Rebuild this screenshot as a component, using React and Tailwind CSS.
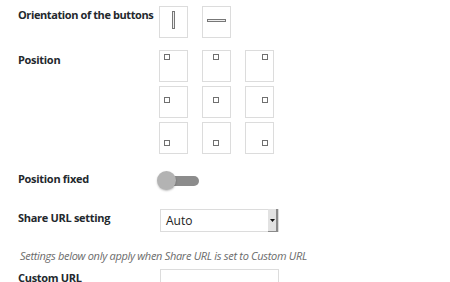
import React from "react";

const font = { fontFamily: '"Open Sans", "DejaVu Sans", sans-serif' };

function Box({ children, cls = "" }) {
  return (
    <div className={"w-[29px] h-[32px] border border-[#dcdcdc] bg-white flex " + cls}>{children}</div>
  );
}

function Sq() {
  return <div className="w-[6px] h-[6px] border border-[#707070] bg-white" />;
}

export default function App() {
  const aligns = [
    ["items-start justify-start", "items-start justify-center", "items-start justify-end"],
    ["items-center justify-start", "items-center justify-center", "items-center justify-end"],
    ["items-end justify-start", "items-end justify-center", "items-end justify-end"],
  ];
  return (
    <div className="w-[450px] h-[282px] overflow-hidden bg-white text-[#23282d] pl-[18px] pt-[6px]" style={font}>
      <div className="flex items-start">
        <div className="w-[141px] text-[11px] font-bold leading-[16px] pt-[1px] tracking-[-0.4px] whitespace-nowrap">Orientation of the buttons</div>
        <div className="flex gap-[14px]">
          <Box cls="items-center justify-center pb-[4px]">
            <div className="w-[3px] h-[18px] border border-[#777] bg-[#eee]" />
          </Box>
          <Box cls="items-center justify-center pb-[4px]">
            <div className="w-[19px] h-[3px] border border-[#777] bg-[#eee]" />
          </Box>
        </div>
      </div>

      <div className="flex items-start mt-[12px]">
        <div className="w-[141px] text-[11px] font-bold leading-[16px] pt-[2px] tracking-[-0.3px]">Position</div>
        <div className="grid grid-cols-[29px_29px_29px] gap-x-[14px] gap-y-[4px]">
          {aligns.flat().map((a, i) => (
            <Box key={i} cls={a + " pt-[3px] pb-[7px] pl-[4px] pr-[5px]"}>
              <Sq />
            </Box>
          ))}
        </div>
      </div>

      <div className="flex items-center mt-[17px] h-[20px]">
        <div className="w-[139px] text-[11px] font-bold leading-[16px] -mt-[4px] tracking-[-0.3px]">Position fixed</div>
        <div className="relative w-[42px] h-[20px]">
          <div className="absolute left-[6px] top-[5px] w-[36px] h-[10px] rounded-full bg-[#8c8c8c]" />
          <div className="absolute left-0 top-0 w-[19px] h-[19px] rounded-full bg-[#b3b3b3] shadow-[0_1px_2px_rgba(0,0,0,0.25)]" />
        </div>
      </div>

      <div className="flex items-start mt-[18px]">
        <div className="w-[142px] text-[11px] font-bold leading-[16px] pt-[1px] tracking-[-0.3px]">Share URL setting</div>
        <div className="w-[119px] h-[23px] border border-[#dcdcdc] bg-white flex items-stretch">
          <div className="flex-1 pl-[5px] text-[12px] leading-[21px] text-[#222]">Auto</div>
          <div className="w-[10px] my-[-1px] bg-[#e2e2e2] border-r-2 border-[#8a8a8a] border-b border-b-[#8a8a8a] flex items-center justify-center">
            <svg width="5" height="5" viewBox="0 0 5 5">
              <path d="M0 1h5L2.5 4z" fill="#111" />
            </svg>
          </div>
        </div>
      </div>

      <div className="mt-[16px] pl-[2px] text-[11px] italic leading-[16px] text-[#6b6b6b] whitespace-nowrap tracking-[-0.3px]">
        Settings below only apply when Share URL is set to Custom URL
      </div>

      <div className="flex items-start mt-[5px]">
        <div className="w-[142px] text-[11px] font-bold leading-[16px] pt-[1px] tracking-[-0.3px]">Custom URL</div>
        <div className="w-[119px] h-[23px] border border-[#dcdcdc] bg-white" />
      </div>
    </div>
  );
}
